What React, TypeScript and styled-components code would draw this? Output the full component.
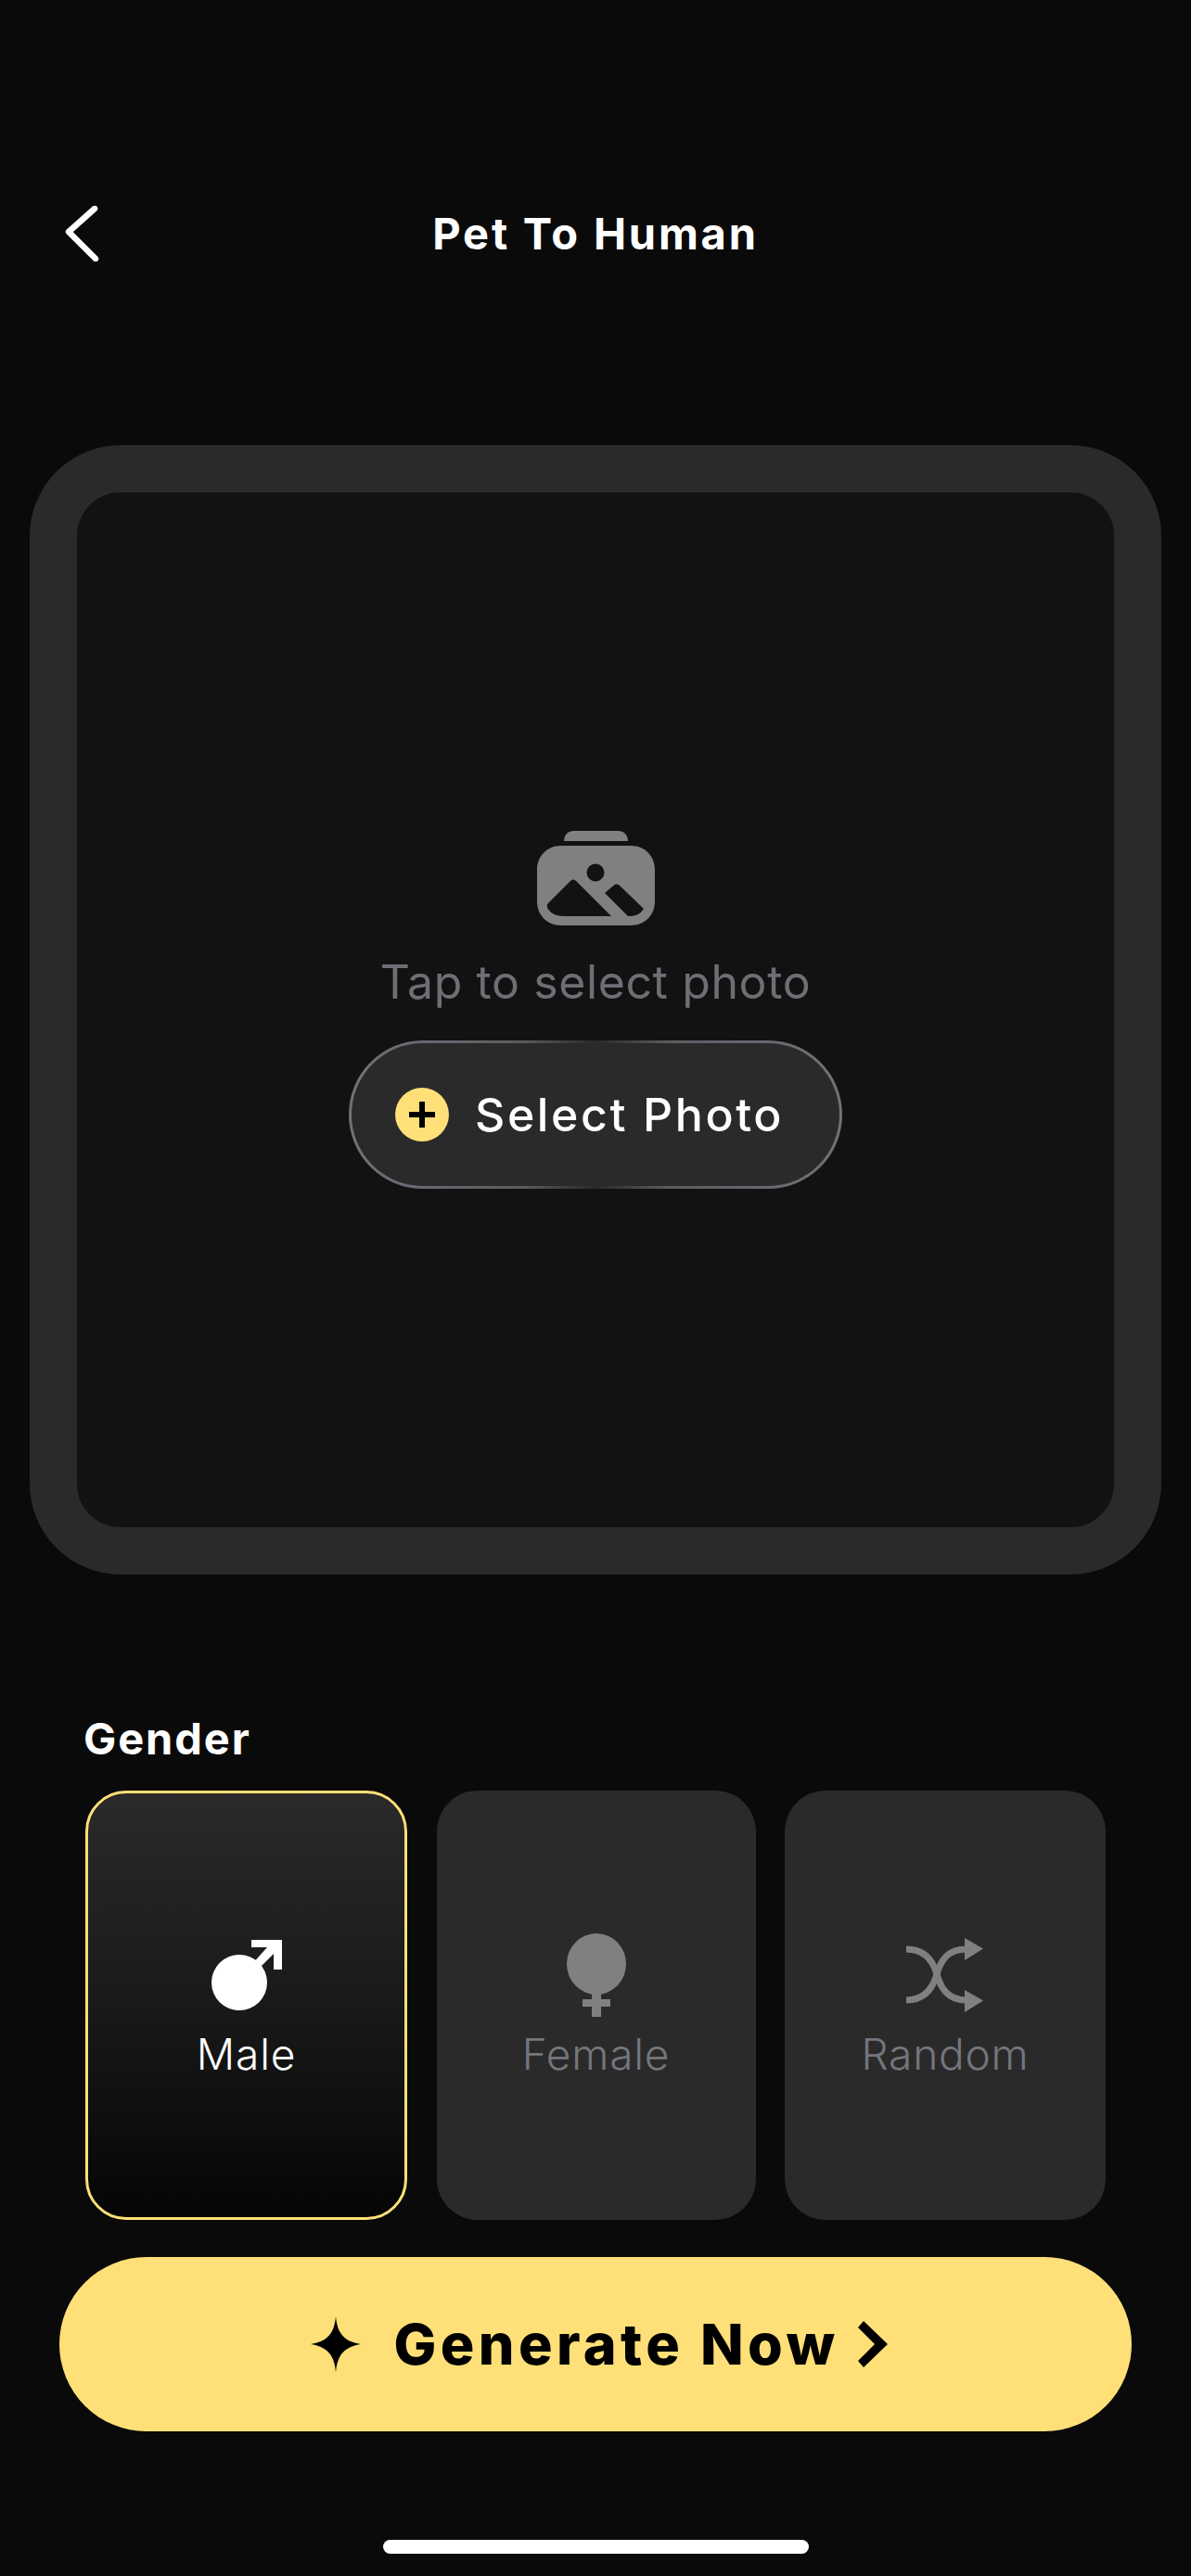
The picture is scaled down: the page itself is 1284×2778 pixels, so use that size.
import React from "react";
import styled, { createGlobalStyle } from "styled-components";

const Global = createGlobalStyle`
  html, body { margin: 0; padding: 0; background: #0a0a0a; }
  * { box-sizing: border-box; }
`;

const Page = styled.div`
  width: 1284px;
  height: 2778px;
  background: #0a0a0a;
  padding-top: 222px;
  display: flex;
  flex-direction: column;
  font-family: Inter, "Liberation Sans", sans-serif;
  overflow: hidden;
`;

const Header = styled.header`
  height: 60px;
  display: grid;
  grid-template-columns: 1fr auto 1fr;
  align-items: center;
  padding: 0 70px;
`;

const BackButton = styled.div`
  display: flex;
  align-items: center;
`;

const Title = styled.h1`
  margin: 0;
  color: #fff;
  font-size: 47px;
  font-weight: 700;
  letter-spacing: 2.8px;
  line-height: 60px;
`;

const PhotoFrame = styled.section`
  margin: 198px 0 0 32px;
  width: 1220px;
  height: 1218px;
  border: 51px solid #2a2a2a;
  border-radius: 98px;
  background: #121212;
  display: flex;
  flex-direction: column;
  align-items: center;
  justify-content: center;
`;

const Hint = styled.p`
  margin: 31px 0 0;
  color: #6d6f75;
  font-size: 50px;
  font-weight: 400;
  letter-spacing: 0.6px;
  line-height: 60px;
`;

const SelectButton = styled.div`
  margin-top: 33px;
  width: 532px;
  height: 160px;
  border-radius: 80px;
  border: 3px solid transparent;
  background:
    linear-gradient(#2a2a2a, #2a2a2a) padding-box,
    linear-gradient(90deg, #70737a 0%, #5a5c61 35%, #2a2a2a 50%, #5a5c61 65%, #70737a 100%) border-box;
  display: flex;
  align-items: center;
  padding-left: 47px;
  gap: 28px;
`;

const PlusBadge = styled.span`
  width: 58px;
  height: 58px;
  border-radius: 50%;
  background: #ffe078;
  display: flex;
  align-items: center;
  justify-content: center;
`;

const SelectLabel = styled.span`
  color: #fff;
  font-size: 50px;
  font-weight: 500;
  letter-spacing: 2.6px;
`;

const SectionLabel = styled.h2`
  margin: 149px 0 0 90px;
  color: #fff;
  font-size: 47px;
  font-weight: 700;
  letter-spacing: 1.9px;
  line-height: 56px;
`;

const Options = styled.div`
  margin: 28px 0 0 92px;
  display: grid;
  grid-template-columns: 347px 344px 346px;
  column-gap: 31.5px;
  height: 463px;
`;

const Option = styled.div<{ $active?: boolean }>`
  border-radius: 44px;
  border: ${(p) => (p.$active ? "3px solid #ffe078" : "none")};
  background: ${(p) =>
    p.$active
      ? "linear-gradient(180deg, #2a2a2a 0%, #1b1b1b 45%, #050505 100%)"
      : "#2a2a2a"};
  display: flex;
  flex-direction: column;
  align-items: center;
  padding-top: ${(p) => (p.$active ? "151px" : "154px")};
`;

const IconSlot = styled.div`
  height: 90px;
  display: flex;
  align-items: center;
  justify-content: center;
`;

const OptionLabel = styled.span<{ $active?: boolean }>`
  margin-top: 12px;
  color: ${(p) => (p.$active ? "#fff" : "#74767c")};
  font-size: 46px;
  font-weight: 350;
  letter-spacing: 0.8px;
  line-height: 56px;
`;

const GenerateButton = styled.div`
  margin: 40px 0 0 64px;
  width: 1156px;
  height: 188px;
  border-radius: 94px;
  background: #ffe078;
  display: flex;
  align-items: center;
  justify-content: center;
  gap: 35px;
  padding-left: 8px;
  color: #000;
`;

const GenerateLabel = styled.span`
  font-size: 61px;
  font-weight: 800;
  letter-spacing: 4.4px;
`;

const GenerateContent = styled.div`
  display: flex;
  align-items: center;
  gap: 20px;
`;

const HomeBar = styled.div`
  margin: 117px 0 0 413px;
  width: 459px;
  height: 15px;
  border-radius: 8px;
  background: #fff;
`;

export default function App() {
  return (
    <Page>
      <Global />
      <Header>
        <BackButton>
          <svg width="40" height="60" viewBox="0 0 40 60" fill="none">
            <path d="M32 3 L4 28 L33 57" stroke="#fff" strokeWidth="6.500" strokeLinecap="round" strokeLinejoin="round" />
          </svg>
        </BackButton>
        <Title>Pet To Human</Title>
      </Header>

      <PhotoFrame>
        <svg width="127" height="102" viewBox="0 0 127 102" fill="#808080">
          <path d="M29 11 C29.500 4 33 0 40 0 H87 C94 0 97.500 4 98 11 Z" />
          <path
            fillRule="evenodd"
            d="M26 16 H101 C116 16 127 27 127 42 V76 C127 91 116 102 101 102 H26 C11 102 0 91 0 76 V42 C0 27 11 16 26 16 Z
               M72.500 45 a9.500 9.500 0 1 0 -19 0 a9.500 9.500 0 1 0 19 0 Z
               M11 79 L36 54 Q39 51 42 54 L80 92 H28 Q17 92 11.500 84 Q10 81 11 79 Z
               M73 67 L83 58.500 Q86 56.500 89 59 L115 84 Q110 92 101 92 H98 Z"
          />
        </svg>
        <Hint>Tap to select photo</Hint>
        <SelectButton>
          <PlusBadge>
            <svg width="30" height="30" viewBox="0 0 30 30" fill="#000">
              <path d="M12 1 H18 V12 H29 V18 H18 V29 H12 V18 H1 V12 H12 Z" />
            </svg>
          </PlusBadge>
          <SelectLabel>Select Photo</SelectLabel>
        </SelectButton>
      </PhotoFrame>

      <SectionLabel>Gender</SectionLabel>
      <Options>
        <Option $active>
          <IconSlot>
            <svg width="76" height="76" viewBox="0 0 76 76" fill="#fff">
              <ellipse cx="30" cy="46" rx="30" ry="30" />
              <path d="M43 0 H76 V32 H67 V15 L49 33 L43 27 L60 8 H43 Z" />
            </svg>
          </IconSlot>
          <OptionLabel $active>Male</OptionLabel>
        </Option>
        <Option>
          <IconSlot>
            <svg width="64" height="90" viewBox="0 0 64 90" fill="#808080">
              <ellipse cx="32" cy="33" rx="32" ry="33" />
              <path d="M27 60 H37 V71 H47 V79 H37 V90 H27 V79 H17 V71 H27 Z" />
            </svg>
          </IconSlot>
          <OptionLabel>Female</OptionLabel>
        </Option>
        <Option>
          <IconSlot>
            <svg width="84" height="80" viewBox="0 0 84 80" fill="none">
              <path d="M0 12 C20 12 29 25 33 39 C37 53 44 67 65 67" stroke="#808080" strokeWidth="7" />
              <path d="M0 67 C20 67 29 53 33 39 C37 25 44 12 65 12" stroke="#808080" strokeWidth="7" />
              <path d="M63 0 L83 11.500 L63 24 Z M63 56 L83 67.500 L63 80 Z" fill="#808080" />
            </svg>
          </IconSlot>
          <OptionLabel>Random</OptionLabel>
        </Option>
      </Options>

      <GenerateButton>
        <svg width="54" height="60" viewBox="0 0 54 60" fill="#000">
          <path d="M27 0 C28.500 17 35 27 54 30 C35 33 28.500 43 27 60 C25.500 43 19 33 0 30 C19 27 25.500 17 27 0 Z" />
        </svg>
        <GenerateContent>
          <GenerateLabel>Generate Now</GenerateLabel>
          <svg width="32" height="50" viewBox="0 0 32 50" fill="#000">
            <path d="M6 0 L32 25 L6 50 L0 43 L18 25 L0 7 Z" />
          </svg>
        </GenerateContent>
      </GenerateButton>
      <HomeBar />
    </Page>
  );
}
